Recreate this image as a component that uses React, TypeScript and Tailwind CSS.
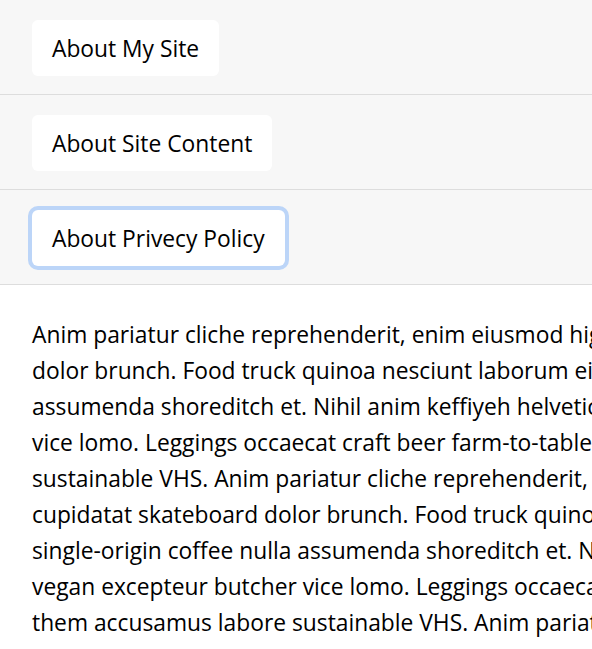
const para =
  "Anim pariatur cliche reprehenderit, enim eiusmod high life accusamus terry richardson ad squid. 3 wolf moon officia aute, non cupidatat skateboard dolor brunch. Food truck quinoa nesciunt laborum eiusmod. Brunch 3 wolf moon tempor, sunt aliqua put a bird on it squid single-origin coffee nulla assumenda shoreditch et. Nihil anim keffiyeh helvetica, craft beer labore wes anderson cred nesciunt sapiente ea proident. Ad vegan excepteur butcher vice lomo. Leggings occaecat craft beer farm-to-table, raw denim aesthetic synth nesciunt you probably haven't heard of them accusamus labore sustainable VHS.";

const lines = [
  "Anim pariatur cliche reprehenderit, enim eiusmod high life accusamus terry richardson ad squid. 3 wolf moon officia aute, non cupidatat skateboard",
  "dolor brunch. Food truck quinoa nesciunt laborum eiusmod. Brunch 3 wolf moon tempor, sunt aliqua put a bird on it squid single-origin coffee nulla",
  "assumenda shoreditch et. Nihil anim keffiyeh helvetica, craft beer labore wes anderson cred nesciunt sapiente ea proident. Ad vegan excepteur butcher",
  "vice lomo. Leggings occaecat craft beer farm-to-table, raw denim aesthetic synth nesciunt you probably haven't heard of them accusamus labore",
  "sustainable VHS. Anim pariatur cliche reprehenderit, enim eiusmod high life accusamus terry richardson ad squid. 3 wolf moon officia aute, non",
  "cupidatat skateboard dolor brunch. Food truck quinoa nesciunt laborum eiusmod. Brunch 3 wolf moon tempor, sunt aliqua put a bird on it squid",
  "single-origin coffee nulla assumenda shoreditch et. Nihil anim keffiyeh helvetica, craft beer labore wes anderson cred nesciunt sapiente ea proident. Ad",
  "vegan excepteur butcher vice lomo. Leggings occaecat craft beer farm-to-table, raw denim aesthetic synth nesciunt you probably haven't heard of",
  "them accusamus labore sustainable VHS. Anim pariatur cliche reprehenderit, enim eiusmod high life accusamus terry richardson ad squid. 3 wolf moon",
  "officia aute, non cupidatat skateboard dolor brunch. Food truck quinoa nesciunt laborum eiusmod. Brunch 3 wolf moon tempor, sunt aliqua put a bird",
];

const items = [
  { title: "About My Site", focused: false },
  { title: "About Site Content", focused: false },
  { title: "About Privecy Policy", focused: true },
];

export default function App() {
  return (
    <div
      className="w-full h-[649px] overflow-hidden bg-white text-black"
      style={{ fontFamily: '"Open Sans", "Noto Sans", sans-serif' }}
    >
      <div className="w-[1400px]">
        {items.map((item) => (
          <div
            key={item.title}
            className="h-[95px] bg-[#f7f7f7] border-b border-[#dddddd] pl-8 pt-5"
          >
            <button
              className={`bg-white rounded-[6px] px-[20px] pt-[11px] pb-[9px] text-[22.8px] leading-[36px] text-black ${
                item.focused ? "ring-4 ring-[#0d6efd]/25" : ""
              }`}
            >
              {item.title}
            </button>
          </div>
        ))}

        <div className="pl-8 pt-[32px] text-[22.8px] leading-[36px]" title={para}>
          {lines.map((l, i) => (
            <div key={i} className="whitespace-nowrap">
              {l}
            </div>
          ))}
        </div>
      </div>
    </div>
  );
}
